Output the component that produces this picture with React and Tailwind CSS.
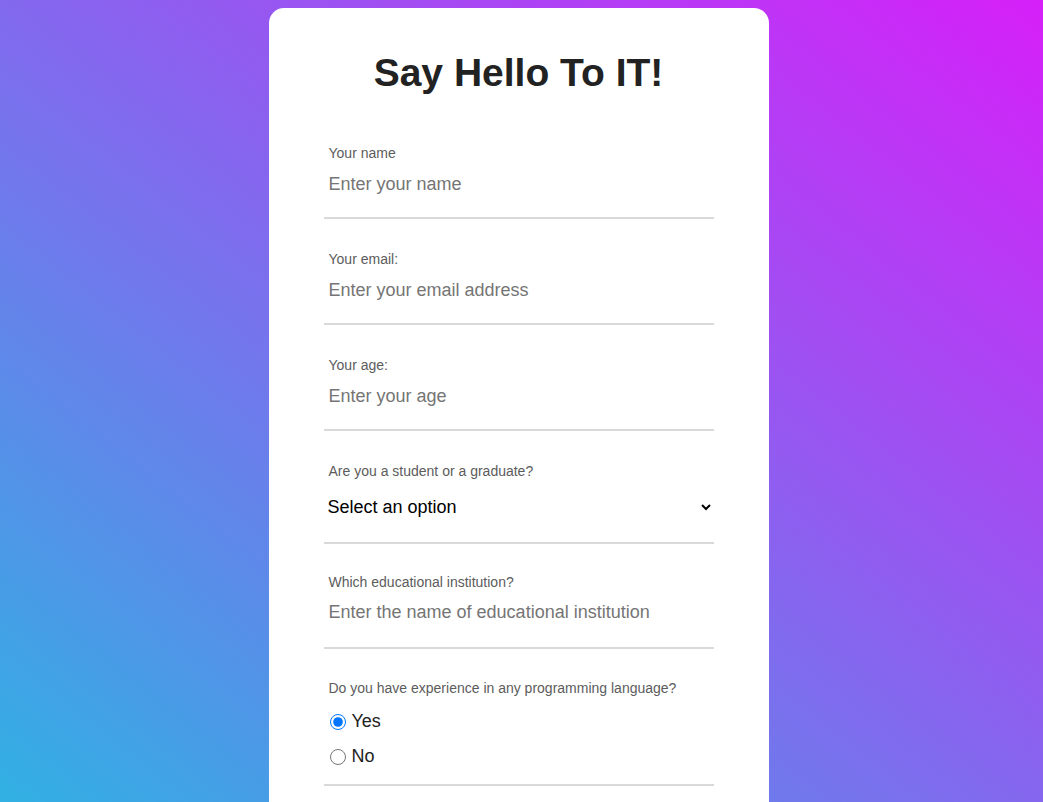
import { useState } from "react";

const textFields = [
  { id: "name", label: "Your name", placeholder: "Enter your name" },
  { id: "email", label: "Your email:", placeholder: "Enter your email address" },
  { id: "age", label: "Your age:", placeholder: "Enter your age" },
];

function Field({ label, htmlFor, className = "", children }) {
  return (
    <div className={`border-b-2 border-[#d9d9d9] ${className}`}>
      <label htmlFor={htmlFor} className="block pl-[5px] text-[14px] leading-4 text-[#5c5c5c]">
        {label}
      </label>
      {children}
    </div>
  );
}

export default function App() {
  const [experience, setExperience] = useState("yes");

  return (
    <div
      className="flex min-h-screen justify-center bg-linear-to-tr/srgb from-[#2eb3e3] to-[#d61ff9] pr-[6px] pt-2"
      style={{ fontFamily: '"Liberation Sans", Arial, sans-serif' }}
    >
      <div className="h-[820px] w-[500px] rounded-t-[15px] bg-white px-[55px] pt-[42px]">
        <h1 className="text-center text-[39px] font-bold leading-[46px] text-[#222]">Say Hello To IT!</h1>

        <form className="mt-[49px]">
          {textFields.map((field) => (
            <Field key={field.id} label={field.label} htmlFor={field.id} className="mb-[32px] pb-[13px]">
              <input
                id={field.id}
                type="text"
                placeholder={field.placeholder}
                className="mt-[3px] block h-[40px] w-full px-[5px] text-[18px] text-[#222] outline-none placeholder:text-[#757575]"
              />
            </Field>
          ))}

          <Field label="Are you a student or a graduate?" htmlFor="status" className="mb-[30px] pb-[13px]">
            <select
              id="status"
              defaultValue=""
              className="mt-[6px] block h-[44px] w-full bg-white text-[18px] text-black outline-none"
            >
              <option value="">Select an option</option>
              <option value="student">Student</option>
              <option value="graduate">Graduate</option>
            </select>
          </Field>

          <Field label="Which educational institution?" htmlFor="institution" className="mb-[31px] pb-[15px]">
            <input
              id="institution"
              type="text"
              placeholder="Enter the name of educational institution"
              className="mt-[2px] block h-[40px] w-full px-[5px] text-[18px] text-[#222] outline-none placeholder:text-[#757575]"
            />
          </Field>

          <Field label="Do you have experience in any programming language?" className="pb-[10px]">
            <div className="mt-[8px]">
              {[
                { value: "yes", label: "Yes" },
                { value: "no", label: "No" },
              ].map((option) => (
                <label key={option.value} className="flex h-[35px] items-center text-[18px] text-[#222]">
                  <input
                    type="radio"
                    name="experience"
                    value={option.value}
                    checked={experience === option.value}
                    onChange={() => setExperience(option.value)}
                    className="ml-[6px] mr-[6px] h-4 w-4"
                  />
                  {option.label}
                </label>
              ))}
            </div>
          </Field>
        </form>
      </div>
    </div>
  );
}
